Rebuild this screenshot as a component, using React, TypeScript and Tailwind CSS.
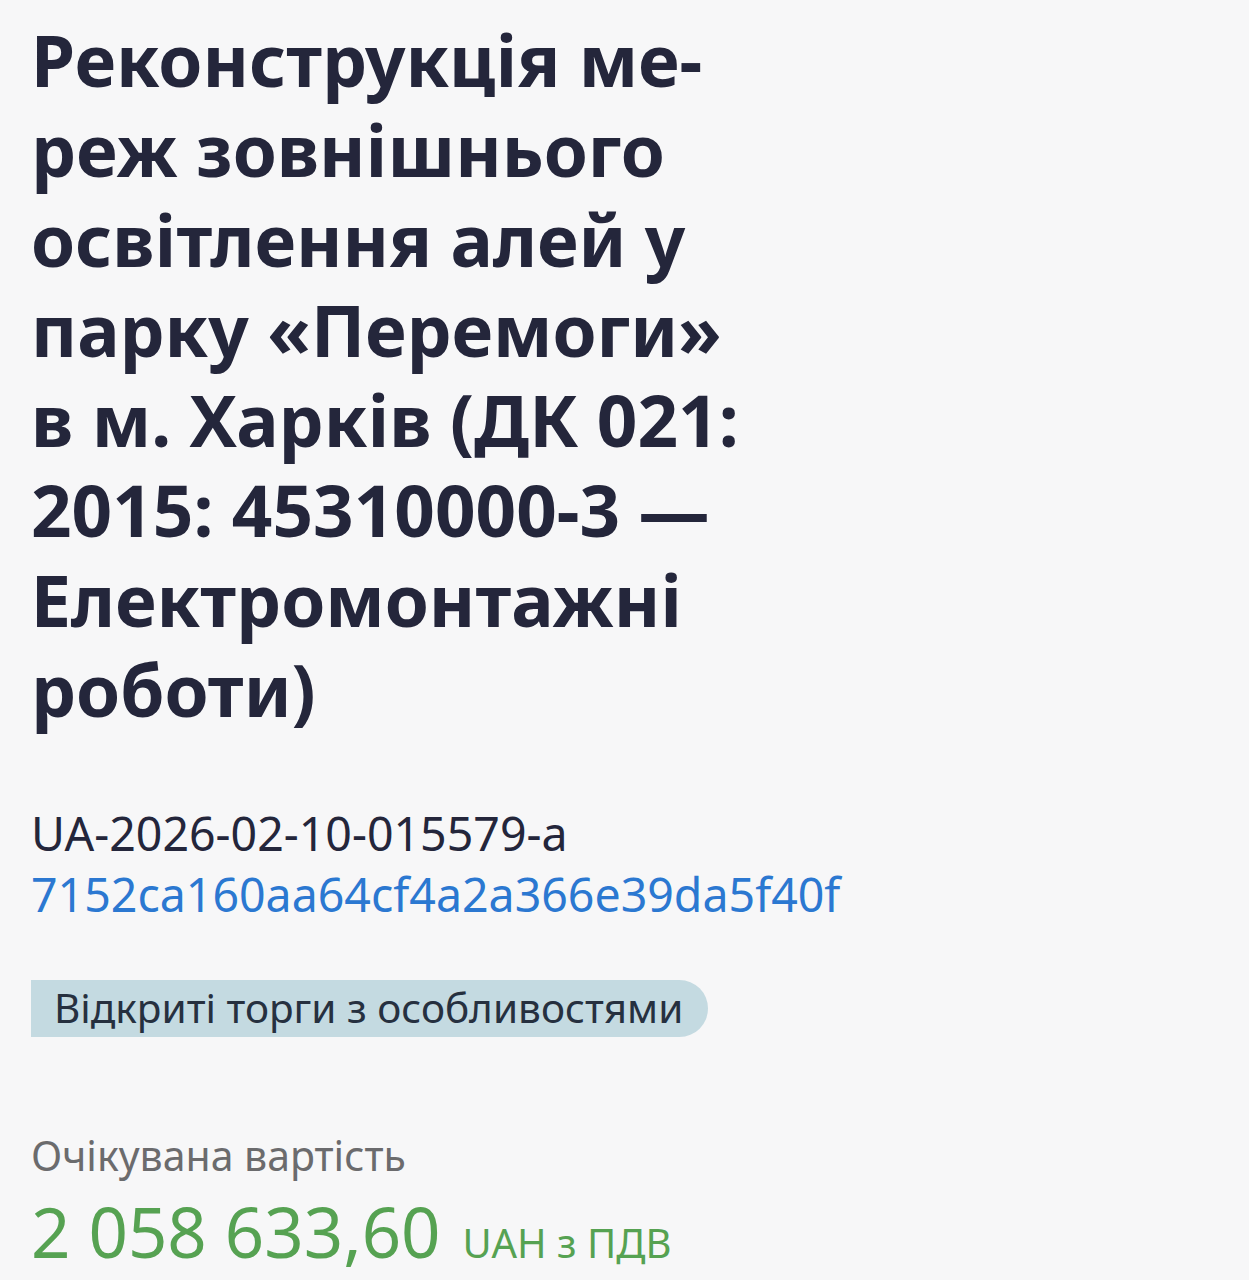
import React from "react";

// Tender header card — title, ids, procedure badge, expected value
const App: React.FC = () => {
  return (
    <div className="min-h-screen w-full bg-[#f7f7f8] px-[31px] pt-[15px] font-['Noto_Sans','Open_Sans',sans-serif]">
      {/* Title */}
      <h1 className="text-[71px] font-bold leading-[90px] text-[#24263b]">
        Реконструкція ме-
        <br />
        реж зовнішнього
        <br />
        освітлення алей у
        <br />
        парку «Перемоги»
        <br />
        в м. Харків (ДК 021:
        <br />
        2015: 45310000-3 —
        <br />
        Електромонтажні
        <br />
        роботи)
      </h1>

      {/* Identifiers */}
      <div className="mt-[68px] text-[46.5px] leading-[61px]">
        <div className="text-[#24263b]">UA-2026-02-10-015579-a</div>
        <div className="text-[#2b78d1]">7152ca160aa64cf4a2a366e39da5f40f</div>
      </div>

      {/* Procedure type */}
      <div className="mt-[55px] inline-flex h-[57px] items-center rounded-l-lg rounded-r-full bg-[#c4dae1] pl-[23px] pr-[25px] text-[40.5px] text-[#26303f]">
        Відкриті торги з особливостями
      </div>

      {/* Expected value */}
      <div className="mt-[90px] text-[41px] leading-[56px] text-[#6b6b6d]">
        Очікувана вартість
      </div>
      <div className="mt-[8px] flex items-baseline gap-[22px] text-[#56a252]">
        <span className="text-[69px] leading-[80px]">2 058 633,60</span>
        <span className="text-[40px]">UAH з ПДВ</span>
      </div>
    </div>
  );
};

export default App;
